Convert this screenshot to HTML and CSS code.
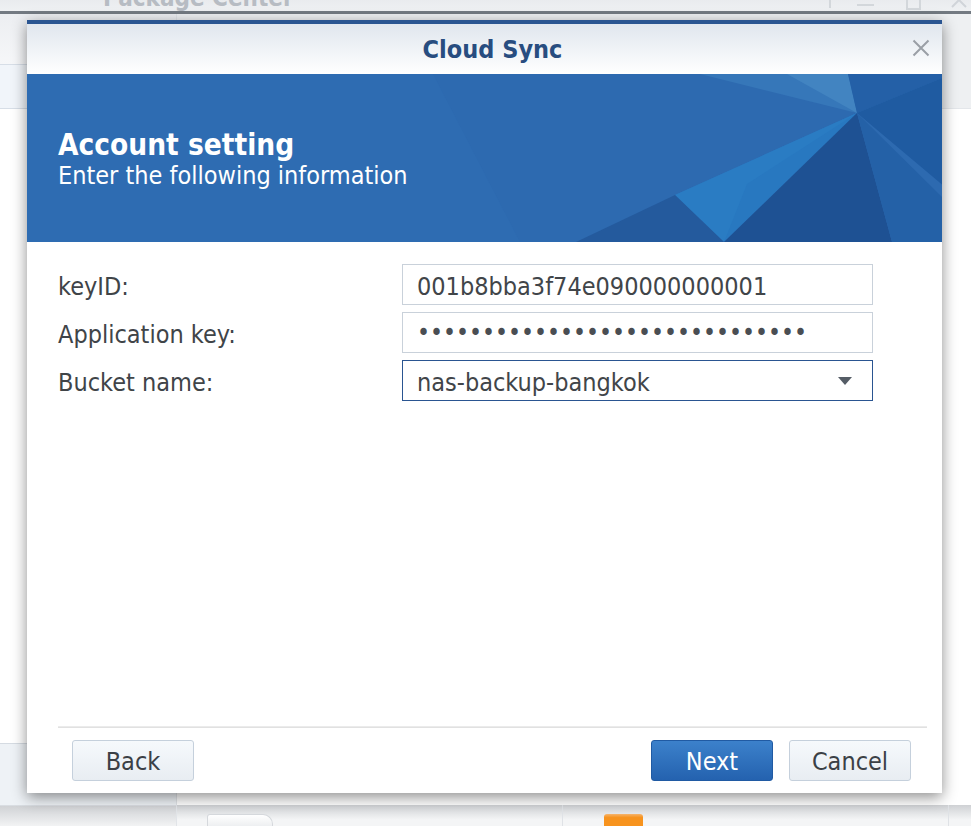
FILE: index.html
```html
<!DOCTYPE html>
<html>
<head>
<meta charset="utf-8">
<link rel="stylesheet" href="styles.css">
</head>
<body>
<div class="app">
  <div class="app-top">
    <div class="app-title">Package Center</div>
    <div class="app-controls">
      <span class="ctl ctl-pin"></span>
      <span class="ctl ctl-min"></span>
      <span class="ctl ctl-max"></span>
      <span class="ctl ctl-x">
        <svg width="16" height="16" viewBox="0 0 16 16"><path d="M1 1 L15 15 M15 1 L1 15" stroke="#d0d4d9" stroke-width="2" fill="none"/></svg>
      </span>
    </div>
  </div>
  <div class="app-line"></div>
  <div class="app-body">
    <div class="sidebar">
      <div class="side-head"></div>
      <div class="side-item active"></div>
      <div class="side-fill"></div>
      <div class="side-foot"></div>
      <div class="side-bottom"></div>
    </div>
    <div class="main">
      <div class="main-head"></div>
      <div class="main-fill"></div>
      <div class="main-row">
        <div class="cell"><span class="pkg pkg-doc"></span></div>
        <div class="cell"><span class="pkg pkg-orange"></span></div>
        <div class="cell"></div>
      </div>
    </div>
  </div>
</div>

<div class="dialog">
  <div class="dlg-title">
    <span class="dlg-title-text">Cloud Sync</span>
    <span class="dlg-close">
      <svg width="18" height="18" viewBox="0 0 18 18"><path d="M1.5 1.5 L16.5 16.5 M16.5 1.5 L1.5 16.5" stroke="#9a9fa6" stroke-width="2" fill="none"/></svg>
    </span>
  </div>
  <div class="banner">
    <svg class="banner-art" width="915" height="168" viewBox="0 0 915 168">
      <rect width="915" height="168" fill="#2e6cb2"/>
      <polygon points="406,0 915,0 915,168 493,168" fill="#2d6ab0"/>
      <polygon points="673,0 821,0 830,39" fill="#3677b9"/>
      <polygon points="760,0 821,0 830,39" fill="#4284c1"/>
      <polygon points="821,0 915,0 915,4 830,39" fill="#2460a7"/>
      <polygon points="915,4 830,39 930,123 915,168" fill="#1f5ba1"/>
      <polygon points="830,39 648,121 697,168" fill="#2878c0"/>
      <polygon points="830,39 720,110 697,168 648,121" fill="#2a7cc3"/>
      <polygon points="830,39 697,168 865,168" fill="#1e5193"/>
      <polygon points="830,39 865,168 915,168 915,123" fill="#2461a7"/>
      <polygon points="648,121 549,168 697,168" fill="#245a9d"/>
    </svg>
    <div class="banner-text">
      <div class="banner-h">Account setting</div>
      <div class="banner-sub">Enter the following information</div>
    </div>
  </div>
  <div class="form">
    <div class="row">
      <label class="lbl">keyID:</label>
      <div class="field">001b8bba3f74e090000000001</div>
    </div>
    <div class="row">
      <label class="lbl">Application key:</label>
      <div class="field field-pass">••••••••••••••••••••••••••••••</div>
    </div>
    <div class="row">
      <label class="lbl">Bucket name:</label>
      <div class="field field-select">
        <span>nas-backup-bangkok</span>
        <svg class="caret" width="14" height="8" viewBox="0 0 14 8"><polygon points="0,0 14,0 7,8" fill="#555d66"/></svg>
      </div>
    </div>
  </div>
  <div class="footer">
    <div class="sep"></div>
    <div class="buttons">
      <button class="btn">Back</button>
      <div class="spacer"></div>
      <button class="btn btn-primary">Next</button>
      <button class="btn">Cancel</button>
    </div>
  </div>
</div>
</body>
</html>
```
FILE: styles.css
```css
html, body {
  margin: 0;
  padding: 0;
}
body {
  width: 971px;
  height: 826px;
  overflow: hidden;
  position: relative;
  font-family: "DejaVu Sans Condensed", "DejaVu Sans", sans-serif;
  font-stretch: condensed;
  background: #ffffff;
}
.app {
  display: flex;
  flex-direction: column;
  height: 826px;
}
.app-top {
  height: 11px;
  background: linear-gradient(#e9ebee, #eff1f3);
  overflow: hidden;
  display: flex;
  justify-content: space-between;
}
.app-title {
  margin-left: 103px;
  margin-top: -14px;
  font-size: 24px;
  font-weight: bold;
  color: #b7bcc3;
  line-height: 24px;
}
.app-controls {
  display: flex;
  gap: 26px;
  margin-right: 4px;
  margin-top: -6px;
  align-items: flex-start;
}
.ctl {
  display: block;
  width: 16px;
  height: 14px;
}
.ctl-pin { border-right: 2px solid #d3d7db; width: 6px; margin-right: 0; }
.ctl-min { border-bottom: 2px solid #d3d7db; height: 10px; width: 17px; }
.ctl-max { border: 2px solid #d3d7db; height: 12px; width: 11px; margin-left: 6px; }
.ctl-x { margin-top: -2px; height: 16px; margin-left: 4px; }
.app-line {
  height: 3px;
  background: #737a82;
}
.app-body {
  flex: 1;
  display: flex;
  background: #fbfcfd;
  min-height: 0;
}
.sidebar {
  flex: none;
  width: 176px;
  display: flex;
  flex-direction: column;
}
.side-head {
  height: 50px;
  background: linear-gradient(#eceef1, #f6f7f9);
  border-bottom: 1px solid #d7dee7;
}
.side-item {
  height: 43px;
  border-bottom: 1px solid #d7dee7;
}
.side-item.active { background: #f1f5fa; }
.side-fill { flex: 1; background: #ffffff; }
.side-foot {
  height: 61px;
  background: #eef2f6;
  border-top: 1px solid #d5dbe2;
  border-bottom: 1px solid #d9dde2;
}
.side-bottom {
  height: 20px;
  background: linear-gradient(#d0d2d5, #f2f3f4);
}
.main {
  flex: 1;
  min-width: 0;
  overflow: hidden;
  display: flex;
  flex-direction: column;
  border-left: 1px solid #e1e4e8;
}
.main-head {
  height: 94px;
  border-bottom: 1px solid #e3e6ea;
  background: #eef0f2;
}
.main-fill { flex: 1; background: #ffffff; }
.main-row {
  height: 21px;
  display: flex;
  background: linear-gradient(#cfd1d4, #f4f5f6 70%);
}
.cell {
  flex: none;
  width: 385px;
  border-right: 1px solid #dfe2e6;
}
.pkg {
  display: block;
  margin-top: 9px;
}
.pkg-doc {
  margin-left: 30px;
  width: 64px;
  height: 12px;
  background: linear-gradient(#ffffff, #eceef0);
  border: 1px solid #d5d8dc;
  border-bottom: none;
  border-radius: 3px 10px 0 0;
}
.pkg-orange {
  margin-left: 41px;
  width: 39px;
  height: 12px;
  background: linear-gradient(#f6b46c, #f7931e 30%);
  border-radius: 3px 3px 0 0;
}

/* Dialog */
.dialog {
  position: absolute;
  left: 27px;
  top: 20px;
  width: 915px;
  height: 773px;
  background: #ffffff;
  box-shadow: 0 4px 14px rgba(0, 0, 0, 0.45);
  display: flex;
  flex-direction: column;
  border-top: 4px solid #2a5591;
  box-sizing: border-box;
}
.dlg-title {
  height: 50px;
  flex: none;
  background: linear-gradient(#e0e6ee, #ffffff);
  display: flex;
  align-items: center;
  justify-content: center;
  position: relative;
}
.dlg-title-text {
  font-size: 25px;
  font-weight: bold;
  color: #284d80;
  margin-left: 16px;
}
.dlg-close {
  position: absolute;
  right: 12px;
  top: 15px;
  width: 18px;
  height: 18px;
}
.banner {
  height: 168px;
  flex: none;
  position: relative;
  overflow: hidden;
  background: #2e6cb2;
}
.banner-art {
  position: absolute;
  left: 0;
  top: 0;
}
.banner-text {
  position: relative;
  padding: 55px 0 0 31px;
  color: #ffffff;
}
.banner-h {
  font-size: 29.5px;
  font-weight: bold;
  line-height: 32px;
}
.banner-sub {
  font-size: 25px;
  line-height: 30px;
}
.form {
  flex: 1;
  padding: 22px 69px 0 31px;
  display: flex;
  flex-direction: column;
  gap: 7px;
}
.row {
  display: flex;
  align-items: center;
  height: 41px;
}
.lbl {
  width: 344px;
  font-size: 25px;
  color: #404448;
  padding-top: 3px;
}
.field {
  width: 471px;
  height: 41px;
  box-sizing: border-box;
  border: 1px solid #c9d1da;
  padding: 3px 14px 0;
  display: flex;
  align-items: center;
  font-size: 25px;
  color: #414549;
}
.field-pass {
  font-size: 24.5px;
  color: #4a4e53;
  padding-top: 0;
}
.field-select {
  border-color: #2a5591;
  justify-content: space-between;
}
.caret {
  margin-right: 6px;
  margin-top: -3px;
}
.footer {
  display: flex;
  flex-direction: column;
}
.sep {
  height: 2px;
  margin: 0 15px 0 31px;
  background: linear-gradient(#f0f0f0, #dcdcdc);
}
.buttons {
  display: flex;
  align-items: center;
  padding: 12px 31px 12px 45px;
  gap: 16px;
}
.spacer { flex: 1; }
.btn {
  width: 122px;
  height: 41px;
  border: 1px solid #c5d0dc;
  border-radius: 3px;
  background: linear-gradient(#f6f9fc, #e8edf2);
  font-family: inherit;
  font-stretch: condensed;
  font-size: 25px;
  color: #3b4046;
  padding: 2px 0 0;
}
.btn-primary {
  background: linear-gradient(#3c81cb, #2462af);
  border-color: #205aa3;
  color: #ffffff;
}
```
